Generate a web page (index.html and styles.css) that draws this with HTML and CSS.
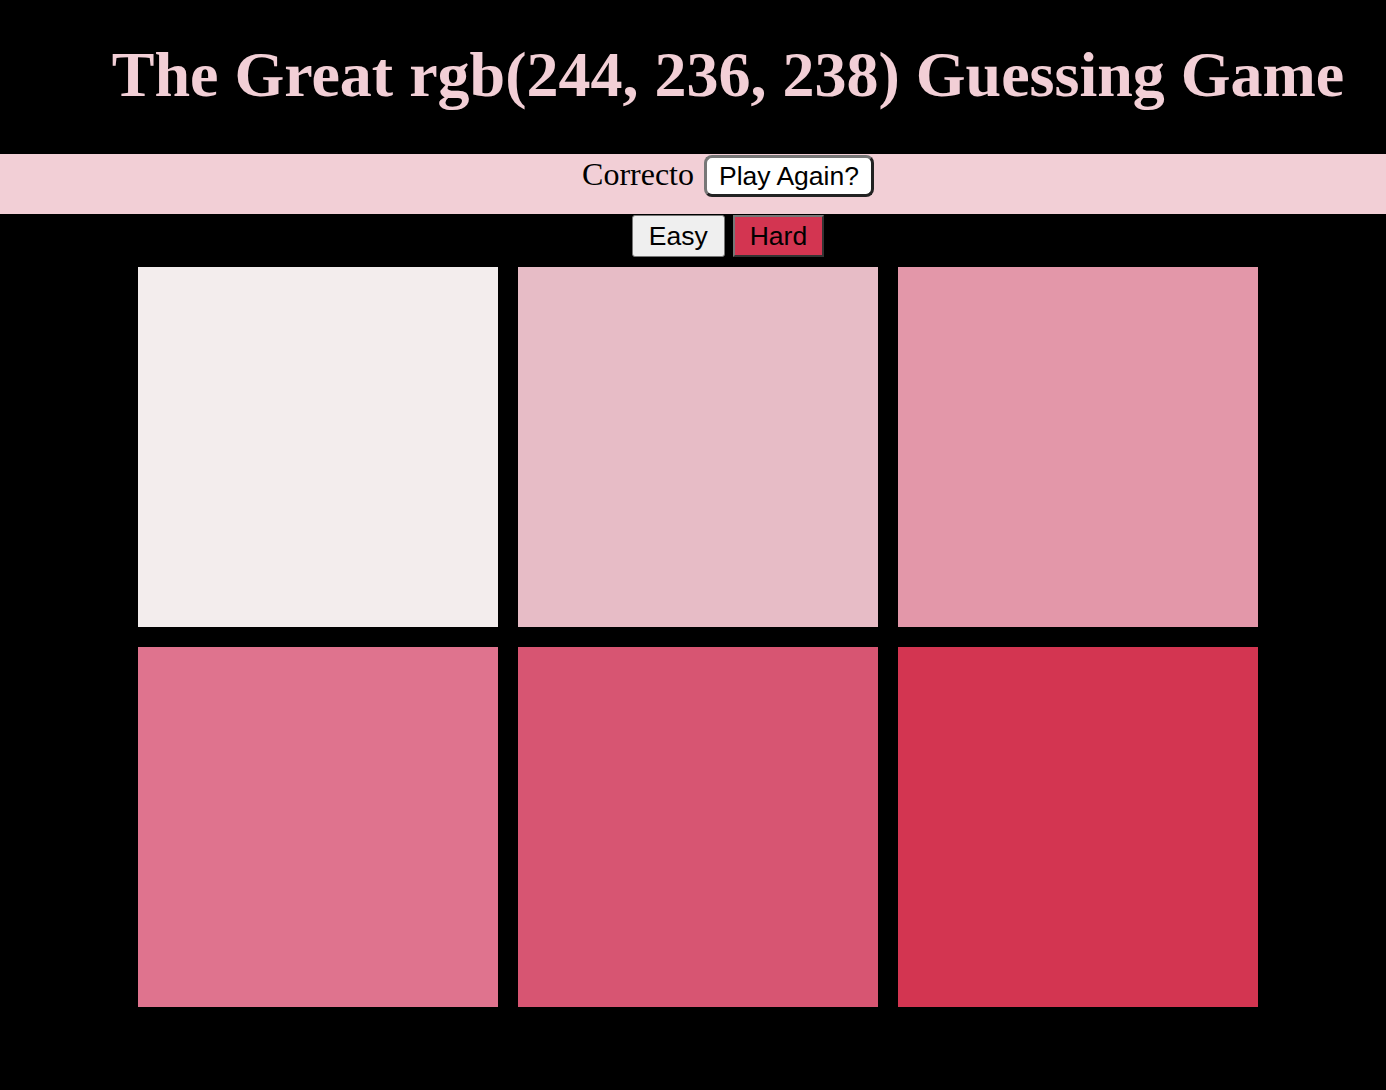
FILE: index.html
```html
<!DOCTYPE html>
<html lang="en">
  <head>
    <meta charset="UTF-8" />
    <meta name="viewport" content="width=device-width, initial-scale=1.0" />
    <title>Color Guessing Game</title>
    <link rel="stylesheet" href="styles.css">
  </head>
  <body>
    <h1 class="title">The Great <span id="colorDisplay">rgb(244, 236, 238)</span> Guessing Game</h1>

    <div class="status-bar">
      <span id="message">Correcto</span>
      <button id="reset" class="reset-btn">Play Again?</button>
    </div>

    <div class="modes">
      <button class="mode-btn">Easy</button>
      <button class="mode-btn selected">Hard</button>
    </div>

    <div class="board">
      <div class="square sq1"></div>
      <div class="square sq2"></div>
      <div class="square sq3"></div>
      <div class="square sq4"></div>
      <div class="square sq5"></div>
      <div class="square sq6"></div>
    </div>
  </body>
</html>
```

FILE: styles.css
```css
body {
  background-color: #000;
  margin: 0;
  padding: 0;
  font-family: "Liberation Serif", "Times New Roman", serif;
}

.title {
  color: #f2cfd6;
  font-size: 64px;
  font-weight: bold;
  text-align: center;
  margin: 0;
  padding: 36px 0 40px 70px;
  line-height: 78px;
}

.status-bar {
  background-color: #f2cfd6;
  height: 60px;
  display: flex;
  justify-content: center;
  align-items: flex-start;
  padding-left: 70px;
  gap: 10px;
  font-size: 32px;
}

.status-bar span {
  line-height: 40px;
}

.reset-btn {
  font-family: "Liberation Sans", Arial, sans-serif;
  font-size: 26.5px;
  background-color: #fff;
  color: #000;
  border: 3px solid;
  border-color: #777 #222 #222 #777;
  border-radius: 8px;
  padding: 0 12px;
  height: 42px;
  margin-top: 1px;
}

.modes {
  display: flex;
  justify-content: center;
  gap: 8px;
  padding-left: 70px;
  height: 53px;
  align-items: flex-start;
}

.mode-btn {
  font-family: "Liberation Sans", Arial, sans-serif;
  font-size: 26.5px;
  height: 42px;
  padding: 0 16px;
  margin-top: 1px;
  background-color: #efefef;
  color: #000;
  border: 1px solid #767676;
  border-radius: 3px;
}

.mode-btn.selected {
  background-color: #d33551;
  border: 2px solid;
  border-color: #777 #333 #333 #777;
  border-radius: 0;
  padding: 0 15px;
}

.board {
  display: grid;
  grid-template-columns: repeat(3, 360px);
  gap: 20px;
  justify-content: center;
  padding-left: 10px;
}

.square {
  height: 360px;
}

.sq1 { background-color: #f3eded; }
.sq2 { background-color: #e7bcc6; }
.sq3 { background-color: #e397a9; }
.sq4 { background-color: #df738e; }
.sq5 { background-color: #d75572; }
.sq6 { background-color: #d33551; }
```
